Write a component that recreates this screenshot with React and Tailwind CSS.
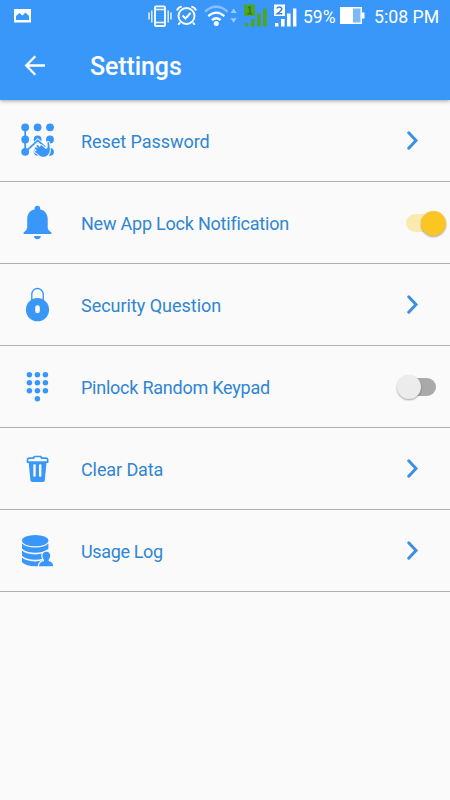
import { useState } from 'react';

const ROWS = [
  { id: 'reset',    label: 'Reset Password',            icon: PatternIcon,  tracking: 'tracking-[-0.05px]' },
  { id: 'notify',   label: 'New App Lock Notification', icon: BellIcon,     tracking: 'tracking-[-0.22px]', toggle: true },
  { id: 'question', label: 'Security Question',         icon: LockIcon,     tracking: 'tracking-[-0.02px]' },
  { id: 'keypad',   label: 'Pinlock Random Keypad',     icon: KeypadIcon,   tracking: 'tracking-[-0.24px]', toggle: true },
  { id: 'clear',    label: 'Clear Data',                icon: TrashIcon,    tracking: 'tracking-[-0.1px]' },
  { id: 'usage',    label: 'Usage Log',                 icon: DatabaseIcon, tracking: 'tracking-[-0.35px]' },
];

function RowIcon({ children }) {
  return (
    <svg width="40" height="41" viewBox="0 0 40 41" fill="currentColor" className="ml-[18px] shrink-0 text-[#3a97fa]">
      {children}
    </svg>
  );
}

function PatternIcon() {
  return (
    <RowIcon>
      {[7.3, 19.5, 31.8].map(y => [7.2, 19.6, 32].map(x => (
        <circle key={`${x}-${y}`} cx={x} cy={y} r="3.9" />
      )))}
      <path d="M16 24.6L19.8 20.6L26 26" fill="none" stroke="#fafafa" strokeWidth="3.6" />
      <path d="M7.2 7V32L19.8 20.4L27 27" fill="none" stroke="currentColor" strokeWidth="1.8" />
      {/* Hand with the index finger pointing up */}
      <path
        d="M29.4 22.4Q30.5 21.4 31.1 22.8L31.9 29.5Q32 33.4 29.3 35.6Q26.4 37.6 23 36.4Q20.4 35.2 18.9 33.3L17 32.3Q16.4 31.3 17.6 30.9L19 30.6L16.8 28.7Q16.2 27.5 17.6 27.2L19.8 28.2L18.4 26Q18.4 24.8 19.7 25L22 27.2L22.4 25.4Q23.4 24.8 24.2 25.8L28 29Q29.8 28.6 29.7 26.5Z"
        stroke="#fafafa" strokeWidth="1.8" paintOrder="stroke"
      />
    </RowIcon>
  );
}

function BellIcon() {
  return (
    <RowIcon>
      <circle cx="19.4" cy="6.6" r="2.8" />
      <path d="M19.4 7C25.5 7 29.7 11 29.7 17V25.5Q29.7 28 33.4 30.6V31.9H5.6V30.6Q9.2 28 9.2 25.5V17C9.2 11 13.3 7 19.4 7Z" />
      <path d="M15.9 34H22.9Q22.3 37.2 19.4 37.2T15.9 34Z" />
    </RowIcon>
  );
}

function LockIcon() {
  return (
    <RowIcon>
      <path d="M13.8 17V10.2A5.7 5.7 0 0 1 25.2 10.2V17" fill="none" stroke="currentColor" strokeWidth="1.4" />
      <circle cx="19.5" cy="25.7" r="11.6" />
      <rect x="17.2" y="21.3" width="4.6" height="8" rx="2.3" fill="#fafafa" />
    </RowIcon>
  );
}

function KeypadIcon() {
  return (
    <RowIcon>
      {[8.7, 16.7, 24.7].map(y => [11.4, 19.4, 27.4].map(x => (
        <circle key={`${x}-${y}`} cx={x} cy={y} r="2.75" />
      )))}
      <circle cx="19.4" cy="32.7" r="2.75" />
    </RowIcon>
  );
}

function TrashIcon() {
  return (
    <RowIcon>
      <path d="M10.6 14H28.6L26.8 32.2Q26.6 34 25 34H14.2Q12.6 34 12.4 32.2Z" />
      <path
        d="M9.5 14.2V12Q9.5 10.2 11.3 10.2H15.5L16.5 8.5H22.7L23.7 10.2H27.9Q29.7 10.2 29.7 12V14.2Z"
        fill="#fafafa" stroke="currentColor" strokeWidth="1.7" strokeLinejoin="round"
      />
      <rect x="15.3" y="16.2" width="2.4" height="12.6" rx="1" fill="#fafafa" />
      <rect x="21" y="16.2" width="2.4" height="12.6" rx="1" fill="#fafafa" />
    </RowIcon>
  );
}

function DatabaseIcon() {
  return (
    <RowIcon>
      <ellipse cx="17.2" cy="10.6" rx="13.2" ry="5.7" />
      <path d="M4 13.6Q8 17.6 17.2 17.6T30.4 13.6V18.8Q26 22.8 17.2 22.8T4 18.8Z" />
      <path d="M4 20.6Q8 24.4 17.2 24.4T30.4 20.6V25.8Q26 29.8 17.2 29.8T4 25.8Z" />
      <path d="M4 27.6Q8 31.4 17.2 31.4T30.4 27.6V32.2Q26 36.2 17.2 36.2T4 32.2Z" />
      <path
        d="M28.3 21.8C31 21.8 32.4 23.5 32.2 26C32 28 31.2 29 30.6 29.8V31Q35 32 35.2 36.2H21Q21.2 32 26 31V29.8C25.3 29 24.6 28 24.4 26C24.2 23.5 25.7 21.8 28.3 21.8Z"
        stroke="#fafafa" strokeWidth="2.4" paintOrder="stroke"
      />
    </RowIcon>
  );
}

function Chevron() {
  return (
    <svg width="14" height="21" viewBox="0 0 14 21" className="ml-auto mr-[30px] shrink-0">
      <path d="M2.7 2.8L10 10.5L2.7 18.2" fill="none" stroke="#3d90e0" strokeWidth="3" strokeLinecap="round" />
    </svg>
  );
}

function Toggle({ on, onClick }) {
  return (
    <button
      onClick={onClick}
      className={`ml-auto flex w-[39px] shrink-0 items-center pt-px ${on ? 'mr-[5px]' : 'mr-3.5'}`}
    >
      {on ? (
        <>
          <span className="h-[18px] w-[27px] shrink-0 rounded-l-full bg-[#fbeab0]" />
          <span className="-ml-[12px] h-[25px] w-[25px] shrink-0 rounded-full bg-[#f9c623] shadow-[0_1px_2px_rgba(0,0,0,0.35)]" />
        </>
      ) : (
        <>
          <span className="z-10 h-6 w-6 shrink-0 rounded-full bg-[#ececec] shadow-[0_1px_2px_rgba(0,0,0,0.35)]" />
          <span className="-ml-[12px] h-[18px] w-[27px] shrink-0 rounded-r-full bg-[#a9a9a9]" />
        </>
      )}
    </button>
  );
}

function StatusBar() {
  return (
    <div className="flex h-8 items-center whitespace-nowrap text-white">
      {/* Screenshot notification */}
      <svg width="17" height="14" viewBox="0 0 17 14" className="ml-3.5 shrink-0">
        <rect width="17" height="13.5" fill="#fff" />
        <path d="M2 11V7L5.5 4L8.5 6.5L11.5 3.5L15 7V11Z" fill="#3a97fa" />
      </svg>

      {/* Vibrate */}
      <svg width="24" height="24" viewBox="0 0 24 24" fill="none" stroke="#fff" className="ml-[117px] shrink-0">
        <path d="M1 8.5V15.5M3.8 6.5V18.5M20.2 6.5V18.5M23 8.5V15.5" strokeWidth="1.5" opacity="0.85" />
        <rect x="7" y="2.4" width="10" height="19.6" rx="1" strokeWidth="1.8" />
        <path d="M7 5.5H17M7 18.5H17" strokeWidth="1.4" />
      </svg>

      {/* Alarm */}
      <svg width="22" height="24" viewBox="0 0 22 24" fill="none" stroke="#fff" strokeWidth="1.9" className="ml-[3px] shrink-0">
        <circle cx="11.5" cy="12" r="8" />
        <path d="M2 6.5Q3 3 6.7 2.6M21 6.5Q20 3 16.3 2.6M5 18.5L3.3 20.8M18 18.5L19.7 20.8M7.5 11.5L10.5 14.5L15.5 9" />
      </svg>

      {/* Wifi with traffic arrows */}
      <svg width="34" height="24" viewBox="0 0 34 24" fill="none" stroke="#fff" strokeWidth="2.3" className="ml-[7px] shrink-0">
        <path d="M1 7.6Q12.3 -2 23.6 7.6" opacity="0.4" />
        <path d="M4.3 12.2Q12.3 5 20.3 12.2M8 16.2Q12.3 12.2 16.6 16.2" />
        <circle cx="12.3" cy="19.6" r="2.5" fill="#fff" stroke="none" />
        <path d="M26.6 9L29.6 4.6L32.6 9ZM26.6 14.2L29.6 18.8L32.6 14.2Z" fill="#fff" stroke="none" opacity="0.5" />
      </svg>

      {/* SIM 1 */}
      <svg width="24" height="24" viewBox="0 0 24 24" fill="#4fa51f" className="ml-[6px] shrink-0">
        <rect x="0" y="0.5" width="11" height="11.5" />
        <path d="M4 3.8L6 3V9.8M3.5 9.8H8.3" fill="none" stroke="#2d7a2c" strokeWidth="1.5" />
        <path d="M1 19H4.4V22.5H1ZM7 15H10.6V22.5H7ZM13 9.5H16.6V22.5H13ZM19 4.5H22.8V22.5H19Z" />
      </svg>

      {/* SIM 2 */}
      <svg width="24" height="24" viewBox="0 0 24 24" fill="#fff" className="ml-[6px] shrink-0">
        <rect x="0" y="0.5" width="11" height="11.5" />
        <path d="M3 4.5Q3.3 3 5.4 3T7.8 5Q7.8 6.2 3.2 9.8H8.2" fill="none" stroke="#3a7fd0" strokeWidth="1.5" />
        <path d="M1 19H4.4V22.5H1ZM7 15H10.6V22.5H7ZM13 9.5H16.6V22.5H13ZM19 4.5H22.4V22.5H19Z" />
      </svg>

      <span className="ml-[5px] w-[34px] pt-px text-[17.5px] leading-8">59%</span>

      {/* Battery */}
      <svg width="25" height="18" viewBox="0 0 25 18" className="ml-[3px] shrink-0">
        <rect width="22" height="17" fill="#fff" />
        <rect x="13" y="1.5" width="7.5" height="14" fill="#7db8fb" />
        <rect x="22" y="5.5" width="2.5" height="6" fill="#fff" />
      </svg>

      <span className="ml-[9px] pt-px text-[17.7px] leading-8">5:08 PM</span>
    </div>
  );
}

export default function App() {
  const [enabled, setEnabled] = useState({ notify: true, keypad: false });

  function toggle(id) {
    setEnabled(prev => ({ ...prev, [id]: !prev[id] }));
  }

  return (
    <div className="h-[800px] w-[450px] overflow-hidden bg-[#fafafa] font-[Roboto,sans-serif]">
      {/* Header */}
      <header className="relative h-[100px] bg-[#3a97fa] shadow-[0_1px_4px_rgba(0,0,0,0.35)]">
        <StatusBar />
        <div className="flex h-[68px] items-center text-white">
          <svg width="22" height="22" viewBox="0 0 22 22" fill="none" stroke="currentColor" strokeWidth="2.3" className="ml-6 shrink-0">
            <path d="M21 10.5H2.5M11.3 1.2L2.2 10.5L11.3 19.8" />
          </svg>
          <h1 className="ml-[44px] pt-0.5 text-[25px] font-medium leading-8 tracking-[-0.1px]">Settings</h1>
        </div>
      </header>

      {/* Settings list */}
      <main>
        {ROWS.map(({ id, label, icon: Icon, tracking, toggle: hasToggle }) => (
          <div key={id} className="flex h-[82px] items-center border-b border-[#b0b0b0]">
            <Icon />
            <span className={`ml-[23px] whitespace-nowrap pt-0.5 text-[18px] text-[#2f86d2] ${tracking}`}>{label}</span>
            {hasToggle ? <Toggle on={enabled[id]} onClick={() => toggle(id)} /> : <Chevron />}
          </div>
        ))}
      </main>
    </div>
  );
}
